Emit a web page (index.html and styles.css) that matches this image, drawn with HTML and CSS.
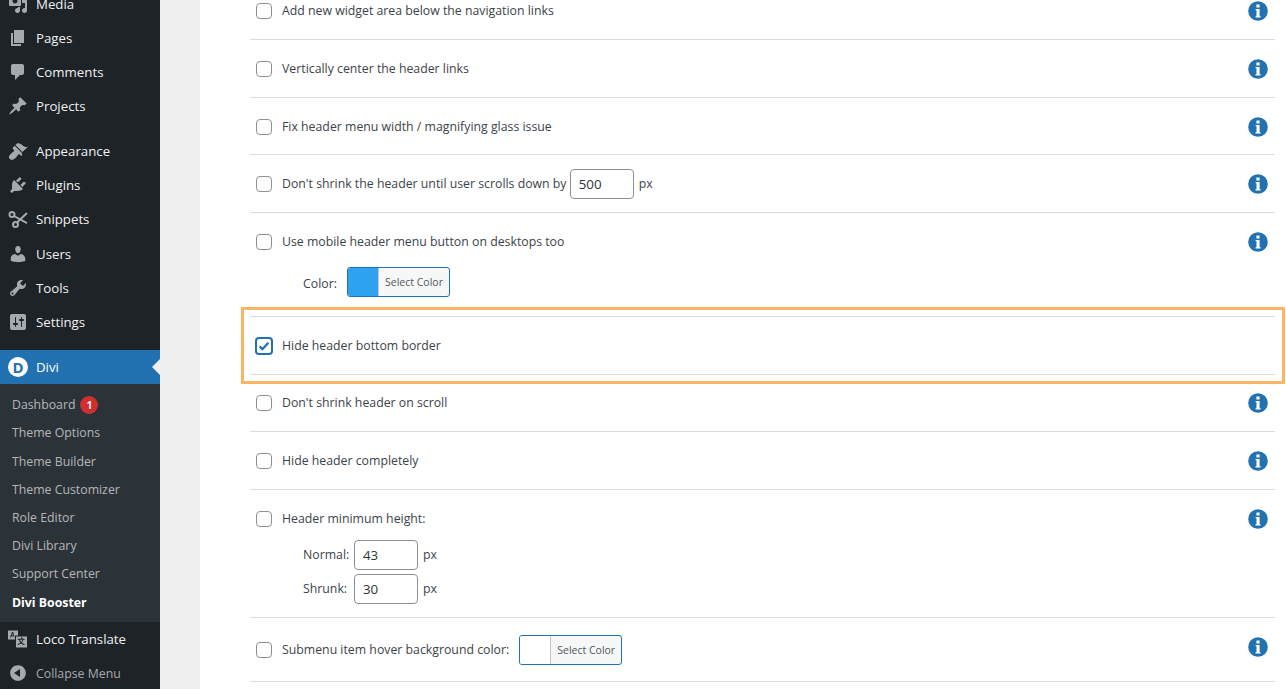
FILE: index.html
```html
<!DOCTYPE html>
<html lang="en">
<head>
<meta charset="utf-8">
<title>Divi Booster</title>
<link rel="stylesheet" href="styles.css">
</head>
<body>
<svg class="defs" aria-hidden="true"><defs>
  <symbol id="info" viewBox="0 0 20 20"><circle cx="10" cy="10" r="9.800"/><path class="info-i" d="M8.400 3.400h3.200v3.100H8.400zM7.600 8h4v7.200h1v1.300H7.500v-1.300h1V9.300h-.9z"/></symbol>
</defs></svg>
<div class="page">
  <nav class="sidebar">
    <ul class="menu menu-top">
      <li class="item item-clip"><svg class="ico" viewBox="0 0 20 20"><path d="M13 11V4c0-.55-.45-1-1-1h-1.670L9 1H5L3.670 3H2c-.55 0-1 .45-1 1v7c0 .55.45 1 1 1h10c.55 0 1-.45 1-1zM7 4.500c1.380 0 2.500 1.120 2.500 2.500S8.380 9.500 7 9.500 4.500 8.380 4.500 7 5.620 4.500 7 4.500zM14 6h5v10.500c0 1.380-1.120 2.500-2.500 2.500S14 17.880 14 16.500s1.120-2.500 2.500-2.500c.17 0 .34.020.5.050V9h-3V6zm-4 8.050V13h2v3.500c0 1.380-1.120 2.500-2.500 2.500S7 17.880 7 16.500 8.120 14 9.500 14c.17 0 .34.020.5.050z"/></svg><span>Media</span></li>
      <li class="item"><svg class="ico" viewBox="0 0 20 20"><path d="M6 15V2h10v13H6zm-1 1h8v2H3V5h2v11z"/></svg><span>Pages</span></li>
      <li class="item"><svg class="ico" viewBox="0 0 20 20"><path d="M5 2h9c1.100 0 2 .9 2 2v7c0 1.100-.9 2-2 2h-2l-5 5v-5H5c-1.100 0-2-.9-2-2V4c0-1.100.9-2 2-2z"/></svg><span>Comments</span></li>
      <li class="item"><svg class="ico" viewBox="0 0 20 20"><path d="M10.440 3.020l1.820-1.820 6.360 6.350-1.830 1.820c-1.050-.68-2.480-.57-3.410.36l-.75.75c-.92.93-1.040 2.350-.35 3.410l-1.830 1.820-2.410-2.410-2.800 2.790c-.42.420-3.380 2.710-3.800 2.290s1.860-3.390 2.280-3.810l2.790-2.790L4.100 9.360l1.830-1.820c1.050.69 2.480.57 3.400-.36l.75-.75c.93-.92 1.050-2.350.36-3.410z"/></svg><span>Projects</span></li>
      <li class="item item-gap"><svg class="ico" viewBox="0 0 20 20"><path d="M14.480 11.060L7.410 3.990l1.500-1.500c.5-.56 2.300-.47 3.510.32 1.210.8 1.430 1.280 2.910 2.100 1.180.64 2.450 1.260 4.670.88zm-.71.71L6.700 4.700 4.930 6.470c-.39.390-.39 1.020 0 1.410l1.060 1.060c.39.390.39 1.030 0 1.420-.6.600-1.430 1.110-2.210 1.690-.35.260-.700.530-1.010.84C1.430 13.730.05 16.140 1.820 17.910s4.180.4 5.990-1.230c.31-.31.580-.66.840-1.010.58-.78 1.090-1.610 1.690-2.210.39-.39 1.020-.39 1.410 0l1.060 1.060c.39.390 1.020.39 1.410 0z"/></svg><span>Appearance</span></li>
      <li class="item"><svg class="ico" viewBox="0 0 20 20"><path d="M13.110 4.360L9.870 7.600 8 5.730l3.240-3.240c.35-.34 1.050-.2 1.560.32.52.51.66 1.210.31 1.550zm-8 1.770l.91-1.120 9.010 9.010-1.190.84c-.71.710-2.630 1.160-3.820 1.160H6.140L4.900 17.260c-.59.590-1.540.59-2.120 0-.59-.58-.59-1.530 0-2.120l1.240-1.240v-3.880c0-1.130.4-3.190 1.090-3.890zm7.260 3.970l3.240-3.240c.34-.35 1.040-.21 1.550.31.52.51.66 1.210.31 1.550l-3.240 3.250z"/></svg><span>Plugins</span></li>
      <li class="item"><svg class="ico ico-scissors" viewBox="0 0 20 20"><circle cx="4" cy="5.500" r="2.500"/><circle cx="7.500" cy="15.500" r="2.500"/><path d="M6 7l13 7.200M9 13.500L19 4"/></svg><span>Snippets</span></li>
      <li class="item"><svg class="ico" viewBox="0 0 20 20"><path d="M10 9.250c-2.270 0-2.730-3.440-2.730-3.440C7 4.020 7.820 2 9.970 2c2.160 0 2.980 2.020 2.710 3.810 0 0-.41 3.440-2.680 3.440zm0 2.570L12.720 10c2.390 0 4.520 2.330 4.520 4.530v2.490s-3.650 1.130-7.240 1.130c-3.650 0-7.240-1.130-7.240-1.130v-2.490c0-2.250 1.940-4.480 4.150-4.480z"/></svg><span>Users</span></li>
      <li class="item"><svg class="ico" viewBox="0 0 20 20"><path d="M16.680 9.770c-1.340 1.340-3.300 1.670-4.950.99l-5.410 6.520c-.99.990-2.590.99-3.570 0-.99-.98-.99-2.580 0-3.570l6.520-5.420c-.68-1.650-.35-3.610.99-4.950 1.280-1.280 3.120-1.620 4.720-1.060l-2.890 2.890 2.820 2.820 2.860-2.870c.53 1.580.18 3.390-1.090 4.650zM3.810 16.210c.4.390 1.030.39 1.420 0 .4-.4.400-1.030 0-1.430-.39-.39-1.020-.39-1.420 0-.39.400-.39 1.030 0 1.430z"/></svg><span>Tools</span></li>
      <li class="item"><svg class="ico" viewBox="0 0 20 20"><path d="M18 16V4c0-1.100-.9-2-2-2H4c-1.100 0-2 .9-2 2v12c0 1.100.9 2 2 2h12c1.100 0 2-.9 2-2zM8 11h1c.55 0 1 .45 1 1s-.45 1-1 1H8v1.500c0 .28-.22.5-.5.5s-.5-.22-.5-.5V13H6c-.55 0-1-.45-1-1s.45-1 1-1h1V5.500c0-.28.22-.5.5-.5s.5.22.5.5V11zm5-2h-1c-.55 0-1-.45-1-1s.45-1 1-1h1V5.500c0-.28.22-.5.5-.5s.5.22.5.5V7h1c.55 0 1 .45 1 1s-.45 1-1 1h-1v5.500c0 .28-.22.5-.5.5s-.5-.22-.5-.5V9z"/></svg><span>Settings</span></li>
      <li class="item item-gap item-current">
        <span class="divi-logo">D</span><span>Divi</span><i class="pointer"></i>
      </li>
    </ul>
    <ul class="submenu">
      <li>Dashboard<b class="badge">1</b></li>
      <li>Theme Options</li>
      <li>Theme Builder</li>
      <li>Theme Customizer</li>
      <li>Role Editor</li>
      <li>Divi Library</li>
      <li>Support Center</li>
      <li class="sub-current">Divi Booster</li>
    </ul>
    <ul class="menu">
      <li class="item"><svg class="ico" viewBox="0 0 20 20"><path fill-rule="evenodd" d="M0 1.500h10v5H7v4H0zM4 3L2 8.500h1l.5-1.300h2.200L6 8.500h.500L5.200 3zM3.800 6.200l.7-2 .7 2z"/><path fill-rule="evenodd" d="M8 7.500h11V18.500H8zM13 8.500v1.300H9.700v1h1.200c.3 1.200.9 2.100 1.500 2.900-.9.600-1.800 1-2.800 1.300l.5 1c1.100-.4 2.100-.9 3-1.500.9.700 1.900 1.200 3.100 1.500l.5-1c-1-.3-2-.7-2.800-1.300.7-.8 1.200-1.700 1.500-2.900h1.200v-1H14.300V8.500zM12 10.800h2.500c-.2.900-.6 1.500-1.200 2.200-.6-.7-1-1.300-1.300-2.200z"/></svg><span>Loco Translate</span></li>
      <li class="item item-muted"><svg class="ico" viewBox="0 0 20 20"><path fill-rule="evenodd" d="M10 2.160c4.330 0 7.840 3.510 7.840 7.840s-3.510 7.840-7.840 7.840S2.160 14.330 2.160 10 5.670 2.160 10 2.160zM12 14V6l-6 4z"/></svg><span>Collapse Menu</span></li>
    </ul>
  </nav>
  <div class="gutter"></div>
  <main class="content">
    <div class="rows">
      <div class="row">
        <label class="opt"><i class="cb"></i>Add new widget area below the navigation links</label>
        <svg class="info"><use href="#info"/></svg>
      </div>
      <div class="row">
        <label class="opt"><i class="cb"></i>Vertically center the header links</label>
        <svg class="info"><use href="#info"/></svg>
      </div>
      <div class="row">
        <label class="opt"><i class="cb"></i>Fix header menu width / magnifying glass issue</label>
        <svg class="info"><use href="#info"/></svg>
      </div>
      <div class="row">
        <label class="opt"><i class="cb"></i>Don't shrink the header until user scrolls down by <span class="field field-inline">500</span><span class="unit">px</span></label>
        <svg class="info"><use href="#info"/></svg>
      </div>
      <div class="row row-color">
        <div class="opt-wrap">
          <label class="opt"><i class="cb"></i>Use mobile header menu button on desktops too</label>
          <div class="sub sub-color"><span class="sub-label sub-label-color">Color:</span><span class="picker picker-blue"><i class="swatch"></i><span class="pick-label">Select Color</span></span></div>
        </div>
        <svg class="info"><use href="#info"/></svg>
      </div>
      <div class="row row-marked">
        <label class="opt"><i class="cb cb-on"><svg viewBox="0 0 16 16"><path d="M3 8.400l3.200 3.200L13 4.200"/></svg></i>Hide header bottom border</label>
        <div class="mark"></div>
      </div>
      <div class="row">
        <label class="opt"><i class="cb"></i>Don't shrink header on scroll</label>
        <svg class="info"><use href="#info"/></svg>
      </div>
      <div class="row">
        <label class="opt"><i class="cb"></i>Hide header completely</label>
        <svg class="info"><use href="#info"/></svg>
      </div>
      <div class="row row-height">
        <div class="opt-wrap">
          <label class="opt"><i class="cb"></i>Header minimum height:</label>
          <div class="sub sub-first"><span class="sub-label">Normal:</span><span class="field">43</span><span class="unit">px</span></div>
          <div class="sub"><span class="sub-label">Shrunk:</span><span class="field">30</span><span class="unit">px</span></div>
        </div>
        <svg class="info"><use href="#info"/></svg>
      </div>
      <div class="row row-picker">
        <label class="opt"><i class="cb"></i>Submenu item hover background color:<span class="picker picker-inline"><i class="swatch"></i><span class="pick-label">Select Color</span></span></label>
        <svg class="info info-picker"><use href="#info"/></svg>
      </div>
    </div>
  </main>
</div>
</body>
</html>
```

FILE: styles.css
```css
* { box-sizing: border-box; }
html, body { margin: 0; height: 100%; overflow: hidden; }
body {
  font-family: "Open Sans", "Noto Sans", sans-serif;
  font-size: 12.300px;
  color: #3c434a;
  background: #fff;
}
ul { list-style: none; margin: 0; padding: 0; }
i { font-style: normal; }
.defs { display: none; }

.page { display: flex; height: 689px; overflow: hidden; }

.sidebar { width: 160px; flex: none; height: 689px; background: #1d2327; overflow: hidden; }
.menu-top { margin-top: -13.450px; }
.item {
  height: 34.200px;
  display: flex;
  align-items: center;
  gap: 8px;
  padding-left: 8px;
  color: #f0f0f1;
  font-size: 13.250px;
  position: relative;
}
.item-gap { margin-top: 10.700px; }
.item-muted { color: #a7aaad; font-size: 12.300px; }
.ico { width: 20px; height: 20px; fill: #a7aaad; flex: none; }
.ico-scissors { fill: none; stroke: #a7aaad; stroke-width: 2; }
.item-current { background: #2271b1; color: #fff; }
.divi-logo {
  width: 20px; height: 20px; border-radius: 50%;
  background: #fff; color: #2271b1;
  font: 700 15px/20px "Open Sans", sans-serif;
  text-align: center; flex: none;
}
.pointer {
  position: absolute; right: 0; top: 50%; margin-top: -8px;
  border: 8px solid transparent; border-right-color: #f0f0f1; border-left-width: 0;
}
.submenu { background: #2c3338; padding: 7.300px 0 5.200px; }
.submenu li { height: 28.200px; padding-left: 12px; color: #c3c4c7; line-height: 28px; white-space: nowrap; opacity: .9; }
.submenu .sub-current { color: #fff; font-weight: 700; opacity: 1; }
.badge {
  display: inline-block; width: 18px; height: 18px; border-radius: 50%;
  background: #e02f2f; color: #fff; font-size: 10.500px; line-height: 18px;
  text-align: center; vertical-align: 0; margin-left: 5px;
}

.gutter { width: 40px; flex: none; background: #f0f0f1; }
.content { flex: 1; min-width: 0; background: #fff; padding: 0 11px 0 50px; }
.rows { margin-top: -17.300px; }

.row {
  position: relative;
  display: flex;
  justify-content: space-between;
  align-items: flex-start;
  padding: 20.700px 7px 19.900px 6px;
  border-bottom: 1px solid #dcdcde;
}
.opt { display: flex; align-items: center; height: 16px; line-height: 16px; white-space: pre; }
.cb {
  width: 16px; height: 16px; flex: none; margin-right: 10px;
  border: 1px solid #8c8f94; border-radius: 4px; background: #fff;
}
.cb-on {
  width: 18px; height: 18px; margin: 0 9px 0 -1px;
  border: 2px solid #2271b1; display: flex; align-items: center; justify-content: center;
}
.cb-on svg { width: 14px; height: 14px; fill: none; stroke: #2271b1; stroke-width: 2.600; flex: none; }
.info { width: 20px; height: 20px; margin: -2px 0; flex: none; fill: #2271b1; }
.info-i { fill: #fff; }
.field {
  display: inline-block; width: 64px; height: 30px; flex: none;
  border: 1px solid #8c8f94; border-radius: 4px; background: #fff;
  color: #2c3338; font-size: 13.300px; line-height: 28px; padding-left: 8px;
}
.field-inline { margin: -7px 0; }
.unit { margin-left: 5px; }
.opt-wrap { display: flex; flex-direction: column; }
.sub { display: flex; align-items: center; white-space: pre; margin-top: 4px; }
.sub-first { margin-top: 13px; }
.sub-color { margin-top: 17px; }
.sub-label { width: 51px; margin-left: 47px; }
.sub-label-color { width: 44px; padding-top: 3px; }
.row-color { padding-bottom: 19.400px; }
.row-height { padding-bottom: 13.400px; }
.picker {
  display: inline-flex; height: 30px; width: 103px; flex: none;
  border: 1px solid #2271b1; border-radius: 3px; overflow: hidden; background: #f6f7f7;
}
.picker-inline { margin: -7px 0 -7px 10px; }
.swatch { width: 31px; background: #fff; border-right: 1px solid #c3c4c7; }
.picker-blue .swatch { background: #2ea2f0; }
.pick-label { flex: 1; text-align: center; font-size: 10.500px; line-height: 28px; color: #50575e; }
.row-picker { padding-top: 24.200px; padding-bottom: 22.800px; }
.info-picker { margin: -5px 0; }
.mark {
  position: absolute; left: -9px; right: -10px; top: -10px; bottom: -10px;
  border: 3.500px solid #fbb663;
  pointer-events: none;
}
```
